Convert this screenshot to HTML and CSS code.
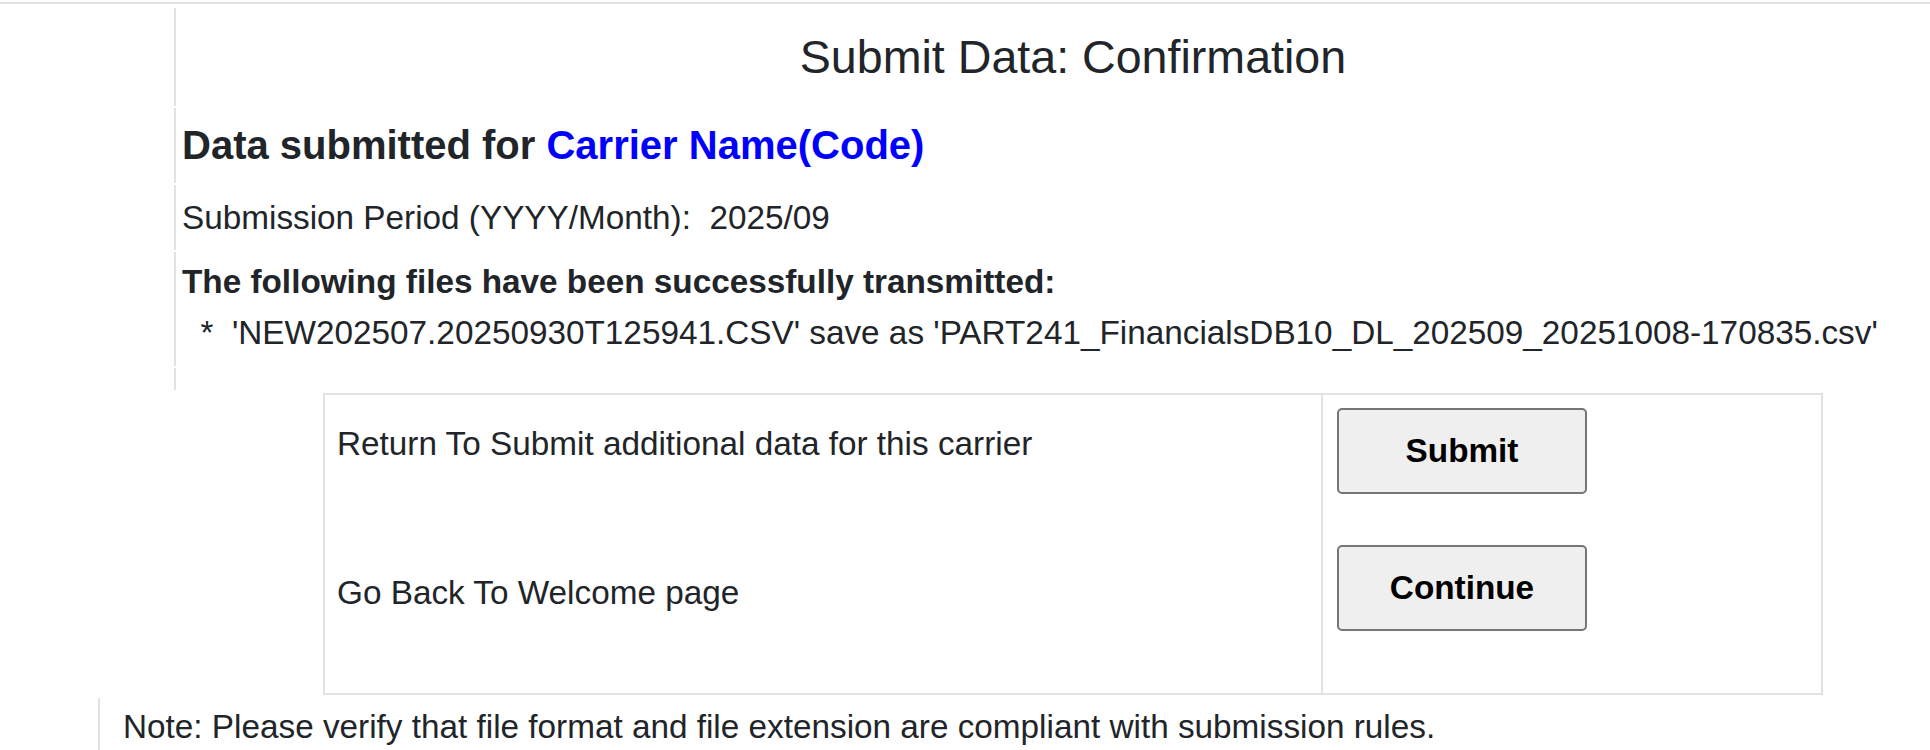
FILE: index.html
```html
<!DOCTYPE html>
<html lang="en">
<head>
<meta charset="utf-8">
<title>Submit Data: Confirmation</title>
<link rel="stylesheet" href="styles.css">
</head>
<body>
<div class="topline"></div>
<div class="summary">
  <div class="row row-title"><h1 class="title">Submit Data: Confirmation</h1></div>
  <div class="row row-carrier"><h2 class="carrier-head">Data submitted for <span class="carrier">Carrier Name(Code)</span></h2></div>
  <div class="row row-period">Submission Period (YYYY/Month):&nbsp;&nbsp;2025/09</div>
  <div class="row row-files">
    <p class="files-head">The following files have been successfully transmitted:</p>
    <p class="file">&nbsp;&nbsp;*&nbsp;&nbsp;'NEW202507.20250930T125941.CSV' save as 'PART241_FinancialsDB10_DL_202509_20251008-170835.csv'</p>
  </div>
  <div class="row row-empty"></div>
</div>
<div class="actions">
  <div class="actions-text">
    <p class="action-label first">Return To Submit additional data for this carrier</p>
    <p class="action-label second">Go Back To Welcome page</p>
  </div>
  <div class="actions-buttons">
    <button class="btn" type="button">Submit</button>
    <button class="btn" type="button">Continue</button>
  </div>
</div>
<div class="note">Note: Please verify that file format and file extension are compliant with submission rules.</div>
</body>
</html>
```
FILE: styles.css
```css
* { box-sizing: border-box; }

html, body {
  margin: 0;
  padding: 0;
  background: #ffffff;
}

body {
  font-family: "Liberation Sans", Arial, sans-serif;
  font-size: 33.3px;
  color: #212529;
  overflow: hidden;
}

.topline {
  height: 2px;
  margin-top: 2px;
  background: #e3e3e3;
}

.summary {
  margin-top: 4px;
  margin-left: 174px;
  display: flex;
  flex-direction: column;
  gap: 2px;
}

.row {
  border-left: 2px solid #e2e2e2;
  padding-left: 6px;
  display: flex;
  align-items: center;
  white-space: nowrap;
}

.row-title {
  height: 98px;
  justify-content: center;
  padding-left: 40px;
}

.title {
  margin: 0;
  font-size: 46.6px;
  font-weight: normal;
  color: #212529;
}

.row-carrier { height: 75px; }

.carrier-head {
  margin: 0;
  font-size: 40px;
  font-weight: bold;
  color: #212529;
}

.carrier { color: #0000ff; }

.row-period { height: 65px; }

.row-files {
  height: 114px;
  flex-direction: column;
  align-items: flex-start;
  justify-content: flex-start;
  padding-top: 4px;
  line-height: 51px;
}

.files-head {
  margin: 0;
  font-weight: bold;
}

.file { margin: 0; }

.row-empty { height: 22px; }

.actions {
  margin-top: 3px;
  margin-left: 323px;
  width: 1500px;
  height: 302px;
  border: 2px solid #e2e2e2;
  display: grid;
  grid-template-columns: 996px 1fr;
}

.actions-text {
  padding: 30px 0 0 12px;
}

.action-label {
  margin: 0;
  line-height: 38px;
}

.action-label.second { margin-top: 111px; }

.actions-buttons {
  border-left: 2px solid #e2e2e2;
  padding: 13px 0 0 14px;
  display: flex;
  flex-direction: column;
  align-items: flex-start;
  gap: 51px;
}

.btn {
  width: 250px;
  height: 86px;
  border: 2px solid #767676;
  border-radius: 5px;
  background: #efefef;
  color: #000000;
  font-family: "Liberation Sans", Arial, sans-serif;
  font-size: 33.3px;
  font-weight: bold;
  padding: 0;
}

.note {
  margin-top: 3px;
  margin-left: 98px;
  border-left: 2px solid #e2e2e2;
  padding: 10px 0 0 23px;
  line-height: 38px;
  height: 60px;
  white-space: nowrap;
}
```
